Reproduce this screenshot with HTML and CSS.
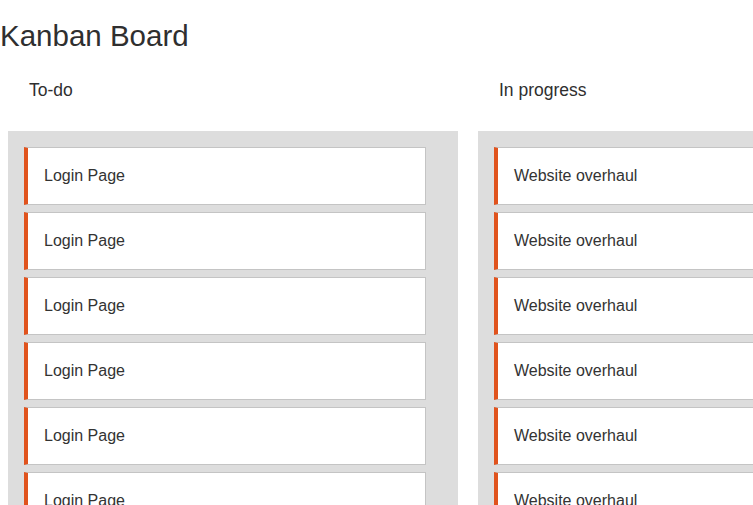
FILE: index.html
```html
<!DOCTYPE html>
<html lang="en">
<head>
<meta charset="utf-8">
<title>Kanban Board</title>
<link rel="stylesheet" href="styles.css">
</head>
<body>
<h1 class="title">Kanban Board</h1>
<div class="board">
  <section class="column">
    <h2 class="column-title">To-do</h2>
    <div class="column-body">
      <div class="card">Login Page</div>
      <div class="card">Login Page</div>
      <div class="card">Login Page</div>
      <div class="card">Login Page</div>
      <div class="card">Login Page</div>
      <div class="card">Login Page</div>
    </div>
  </section>
  <section class="column">
    <h2 class="column-title">In progress</h2>
    <div class="column-body">
      <div class="card">Website overhaul</div>
      <div class="card">Website overhaul</div>
      <div class="card">Website overhaul</div>
      <div class="card">Website overhaul</div>
      <div class="card">Website overhaul</div>
      <div class="card">Website overhaul</div>
    </div>
  </section>
</div>
</body>
</html>
```
FILE: styles.css
```css
html, body {
  margin: 0;
  padding: 0;
  overflow: hidden;
  background: #ffffff;
}
body {
  font-family: "Liberation Sans", Arial, sans-serif;
  color: #333333;
}
.title {
  margin: 0;
  padding-top: 19px;
  font-size: 29.5px;
  line-height: 34px;
  font-weight: normal;
  color: #2f2f2f;
}
.board {
  display: flex;
  gap: 20px;
  padding-left: 8px;
}
.column {
  flex: 0 0 450px;
  width: 450px;
}
.column-title {
  margin: 27px 0 30px 0;
  padding-left: 21px;
  font-size: 17.5px;
  line-height: 21px;
  font-weight: normal;
  color: #2f2f2f;
}
.column-body {
  background: #dddddd;
  padding: 16px 32px 16px 16px;
  display: flex;
  flex-direction: column;
  gap: 7px;
}
.card {
  height: 56px;
  display: flex;
  align-items: center;
  padding-left: 16px;
  background: #ffffff;
  border: 1px solid #c4c4c4;
  border-left: 4px solid #e0531d;
  font-size: 16px;
  color: #333333;
}
```
